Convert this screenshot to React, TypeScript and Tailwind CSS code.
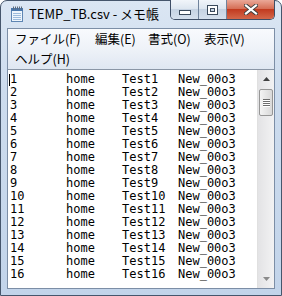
const rows = Array.from({ length: 16 }, (_, i) => i + 1);

function NotepadIcon() {
  return (
    <svg width="14" height="16" viewBox="0 0 14 16">
      <rect x="1.5" y="2.5" width="11" height="13" fill="#eef5fc" stroke="#5f86b3" />
      <rect x="1" y="2" width="12" height="3" fill="#4a78ad" />
      {[7, 9, 11, 13].map((y) => (
        <line key={y} x1="3" x2="11" y1={y + 0.5} y2={y + 0.5} stroke="#9dbbdc" />
      ))}
      {[3, 5, 7, 9, 11].map((x) => (
        <rect key={x} x={x} y="0.5" width="1" height="3" fill="#5d6b7c" />
      ))}
    </svg>
  );
}

function CaptionButtons() {
  return (
    <div className="flex h-[20px] -mt-px rounded-b-[5px] border border-t-0 border-[#3e4e66] overflow-hidden">
      <div className="w-[28px] h-full flex items-end justify-center pb-[4px] border-r border-[#70839c] bg-[linear-gradient(#f1f5fa,#dde6f0_45%,#c6d3e3_50%,#d5e0ed)]">
        <svg width="12" height="5" viewBox="0 0 12 5">
          <rect x="0.5" y="0.5" width="11" height="4" fill="#fff" stroke="#3b4a5c" />
        </svg>
      </div>
      <div className="w-[28px] h-full flex items-center justify-center border-r border-[#70839c] bg-[linear-gradient(#f1f5fa,#dde6f0_45%,#c6d3e3_50%,#d5e0ed)]">
        <svg width="11" height="10" viewBox="0 0 11 10">
          <rect x="0.5" y="0.5" width="10" height="9" fill="#fff" stroke="#3b4a5c" />
          <rect x="3.5" y="3.5" width="4" height="3" fill="#c9d5e4" stroke="#3b4a5c" />
        </svg>
      </div>
      <div className="w-[47px] h-full flex items-center justify-center bg-[linear-gradient(#eaa898,#d66f57_45%,#c23b20_50%,#d4674a)]">
        <svg width="14" height="11" viewBox="0 0 14 11">
          <path d="M2 1.5 L12 9.5 M12 1.5 L2 9.5" stroke="#3f3f3f" strokeWidth="4" strokeLinecap="square" />
          <path d="M2 1.5 L12 9.5 M12 1.5 L2 9.5" stroke="#fff" strokeWidth="2.2" strokeLinecap="square" />
        </svg>
      </div>
    </div>
  );
}

function ScrollBar() {
  return (
    <div className="w-[17px] flex flex-col bg-[linear-gradient(90deg,#e3e3e5,#f2f2f3)] border-l border-[#e0e0e0]">
      <div className="h-[18px] flex items-center justify-center">
        <svg width="7" height="4" viewBox="0 0 7 4">
          <path d="M0 4 L3.5 0 L7 4 Z" fill="#404040" />
        </svg>
      </div>
      <div className="mx-[1px] mt-[1px] h-[27px] rounded-[2px] border border-[#969696] bg-[linear-gradient(90deg,#f4f4f4,#e6e6e6_50%,#d9d9d9)] flex flex-col items-center justify-center gap-[1px]">
        {[0, 1, 2, 3].map((k) => (
          <div key={k} className="w-[7px] h-px bg-[#6d6d6d] shadow-[0_1px_0_#fff]" />
        ))}
      </div>
      <div className="flex-1" />
      <div className="h-[18px] flex items-center justify-center">
        <svg width="7" height="4" viewBox="0 0 7 4">
          <path d="M0 0 L3.5 4 L7 0 Z" fill="#8a8a8a" />
        </svg>
      </div>
    </div>
  );
}

export default function App() {
  return (
    <div className="w-[282px] h-[296px] bg-white">
      <div className="w-full h-full flex flex-col rounded-t-[7px] border border-[#46566c] bg-[linear-gradient(#dbe6f3,#cddcee_30%,#c2d4ea)] font-['Noto_Sans_CJK_JP',sans-serif] text-black">
        <div className="h-[27px] flex items-start shrink-0">
          <div className="ml-[9px] mt-[5px]">
            <NotepadIcon />
          </div>
          <div className="ml-[5px] mt-[5px] text-[13px] leading-[16px]">TEMP_TB.csv - メモ帳</div>
          <div className="ml-auto mr-[6px]">
            <CaptionButtons />
          </div>
        </div>
        <div className="flex-1 mx-[6px] mb-[6px] flex flex-col border border-[#7c8ea6] min-h-0">
          <div className="h-[40px] shrink-0 bg-[linear-gradient(#f8fafd,#eef2f8_50%,#dfe7f2)] text-[12.5px] leading-[20px]">
            <div className="flex h-[20px]">
              <div className="w-[87px] pl-[7px]">ファイル(F)</div>
              <div className="w-[53px]">編集(E)</div>
              <div className="w-[56px]">書式(O)</div>
              <div>表示(V)</div>
            </div>
            <div className="h-[20px] pl-[7px]">ヘルプ(H)</div>
          </div>
          <div className="flex-1 flex border-t border-[#8a96a6] bg-white min-h-0">
            <div className="flex-1 pl-[2px] pt-[3px] font-['DejaVu_Sans_Mono',monospace] text-[12px] leading-[13px] overflow-hidden">
              {rows.map((i) => (
                <div key={i} className="flex h-[13px]">
                  <span className="relative w-[56px]">
                    {i === 1 && <span className="absolute left-[-1px] top-[1px] w-px h-[12px] bg-black" />}
                    {i}
                  </span>
                  <span className="w-[56px]">home</span>
                  <span className="w-[56px]">Test{i}</span>
                  <span>New_00o3</span>
                </div>
              ))}
            </div>
            <ScrollBar />
          </div>
        </div>
      </div>
    </div>
  );
}
